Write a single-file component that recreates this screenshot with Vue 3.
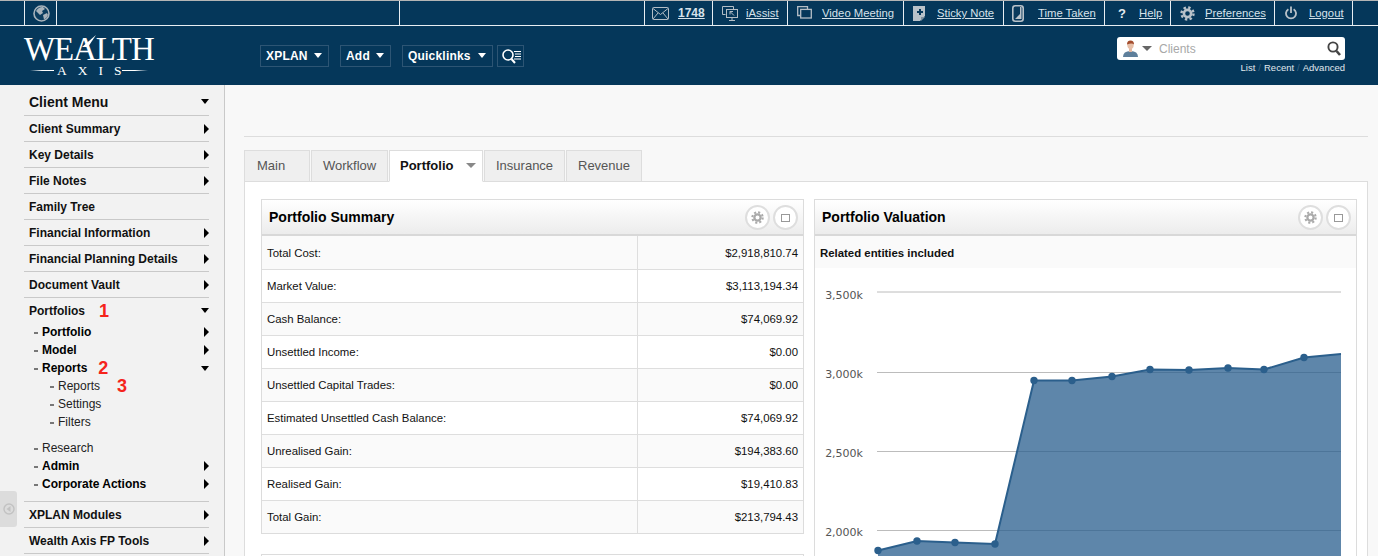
<script setup>
const topItems = [
  { key: 'mail', label: '1748', pad: 7, slot: 26, bold: true },
  { key: 'assist', label: 'iAssist', pad: 9, slot: 24 },
  { key: 'video', label: 'Video Meeting', pad: 9, slot: 25 },
  { key: 'note', label: 'Sticky Note', pad: 9, slot: 24 },
  { key: 'time', label: 'Time Taken', pad: 8, slot: 26 },
  { key: 'help', label: 'Help', pad: 13, slot: 21 },
  { key: 'gear', label: 'Preferences', pad: 9, slot: 25 },
  { key: 'power', label: 'Logout', pad: 10, slot: 24 }
]
const navButtons = ['XPLAN', 'Add', 'Quicklinks']
const menuTop = [
  { label: 'Client Summary', arrow: 'right' },
  { label: 'Key Details', arrow: 'right' },
  { label: 'File Notes', arrow: 'right' },
  { label: 'Family Tree' },
  { label: 'Financial Information', arrow: 'right' },
  { label: 'Financial Planning Details', arrow: 'right' },
  { label: 'Document Vault', arrow: 'right' }
]
const subOne = [
  { label: 'Portfolio', bold: true, arrow: 'right' },
  { label: 'Model', bold: true, arrow: 'right' },
  { label: 'Reports', bold: true, arrow: 'down', mark: '2' },
  { label: 'Reports', deep: true, mark: '3' },
  { label: 'Settings', deep: true },
  { label: 'Filters', deep: true }
]
const subTwo = [
  { label: 'Research' },
  { label: 'Admin', bold: true, arrow: 'right' },
  { label: 'Corporate Actions', bold: true, arrow: 'right' }
]
const menuBottom = ['XPLAN Modules', 'Wealth Axis FP Tools']
const tabs = ['Main', 'Workflow', 'Portfolio', 'Insurance', 'Revenue']
const rows = [
  ['Total Cost:', '$2,918,810.74'],
  ['Market Value:', '$3,113,194.34'],
  ['Cash Balance:', '$74,069.92'],
  ['Unsettled Income:', '$0.00'],
  ['Unsettled Capital Trades:', '$0.00'],
  ['Estimated Unsettled Cash Balance:', '$74,069.92'],
  ['Unrealised Gain:', '$194,383.60'],
  ['Realised Gain:', '$19,410.83'],
  ['Total Gain:', '$213,794.43']
]
const grid = [
  { y: 292, label: '3,500k', base: 299 },
  { y: 372.5, label: '3,000k', base: 378 },
  { y: 451.5, label: '2,500k', base: 457 },
  { y: 530.5, label: '2,000k', base: 536 }
]
const pts = [
  [878, 550.5], [917, 541], [955, 542.5], [995, 544], [1034, 380.5], [1072, 380.5], [1112, 376.5],
  [1150, 369.5], [1189, 370], [1228, 368], [1264, 369.5], [1304, 357.5], [1341, 354]
]
const line = pts.map(p => p.join(',')).join(' ')
const area = `878,570 ${line} 1341,570`
</script>

<template>
  <div class="page">
    <header class="head">
      <div class="topbar">
        <div class="cell"></div>
        <div class="cell globe">
          <svg width="17" height="17" viewBox="0 0 17 17">
            <circle cx="8.5" cy="8.5" r="7.5" fill="#0c3d5f" stroke="#a8b3bb" stroke-width="1.6" />
            <path d="M3 6 Q6 1.5 10 2 L12 4 L9 6 L10 8 L7 10 L5 8 Z M10 10 L14 8 L15 10 Q14 13 11 14.5 Z" fill="#a8b3bb" />
          </svg>
        </div>
        <div class="cell"></div>
        <div class="cell"></div>
        <div v-for="t in topItems" :key="t.key" class="cell item" :style="{ paddingLeft: t.pad + 'px' }">
          <span class="slot" :style="{ width: t.slot + 'px' }">
            <svg v-if="t.key === 'mail'" width="17" height="13" viewBox="0 0 17 13" fill="none" stroke="#b4bec6">
              <rect x=".5" y=".5" width="16" height="12" rx="1" />
              <path d="M1 1.5 L8.5 7.5 L16 1.5 M1 12 L6 6 M16 12 L11 6" />
            </svg>
            <svg v-else-if="t.key === 'assist'" width="16" height="16" viewBox="0 0 16 16" fill="none" stroke="#b4bec6">
              <path d="M3.5 9.5 H.5 V1.5 H11.5 V4" />
              <rect x="4.5" y="4.5" width="11" height="8" />
              <path d="M10 13 V15.5 M7 15.5 H13 M8 6.5 H11 M8 6.5 V9.5 M8 6.5 L12 10.5" />
            </svg>
            <svg v-else-if="t.key === 'video'" width="15" height="14" viewBox="0 0 15 14" fill="none" stroke="#b4bec6" stroke-width="1.3">
              <path d="M3 9.5 H.7 V.7 H10.5 V3" />
              <rect x="3.7" y="3.4" width="10.6" height="8.6" />
            </svg>
            <svg v-else-if="t.key === 'note'" width="12" height="15" viewBox="0 0 12 15">
              <path d="M0 0 H12 V10 L7 15 H0 Z" fill="#b9c2c9" />
              <path d="M8 15 V11 H12 Z" fill="#7f909d" />
              <path d="M6 3 H8 V5 H10 V7 H8 V9 H6 V7 H4 V5 H6 Z" fill="#0a3a5c" />
            </svg>
            <svg v-else-if="t.key === 'time'" width="12" height="17" viewBox="0 0 12 17">
              <rect x=".8" y=".8" width="10.4" height="15.4" rx="2.5" fill="#0a3a5c" stroke="#b9c2c9" stroke-width="1.6" />
              <path d="M8 2 V9 L3 14 H9.5 V2 Z" fill="#b9c2c9" />
            </svg>
            <span v-else-if="t.key === 'help'" class="qmark">?</span>
            <svg v-else-if="t.key === 'gear'" width="15" height="15" viewBox="0 0 15 15" fill="none" stroke="#b9c2c9">
              <circle cx="7.5" cy="7.5" r="3.6" stroke-width="2.6" />
              <circle cx="7.5" cy="7.5" r="6" stroke-width="2.4" stroke-dasharray="2.4 2.31" />
            </svg>
            <svg v-else-if="t.key === 'power'" width="12" height="14" viewBox="0 0 12 14" fill="none" stroke="#b9c2c9" stroke-width="1.8">
              <path d="M3.4 3.2 A5 5 0 1 0 8.6 3.2" />
              <path d="M6 .5 V7" />
            </svg>
          </span>
          <a class="toplink" :class="{ strong: t.bold }">{{ t.label }}</a>
        </div>
        <div class="cell-end"></div>
      </div>

      <div class="brandrow">
        <div class="logo">
          <div class="logo-main">WEALTH</div>
          <svg class="logo-peak" width="30" height="30" viewBox="0 0 30 30">
            <path d="M9 13 L23 1 L15 13 Z" fill="#fff" />
          </svg>
          <div class="logo-sub"><i class="rule rule-l"></i><span>AXIS</span><i class="rule rule-r"></i></div>
        </div>
        <nav class="nav">
          <button v-for="b in navButtons" :key="b" class="navbtn"><span>{{ b }}</span><i class="caret-white"></i></button>
          <button class="navbtn search-btn" aria-label="Search">
            <svg width="22" height="17" viewBox="0 0 22 17" fill="none" stroke="#fff">
              <circle cx="7" cy="7" r="5" stroke-width="1.6" />
              <path d="M10.5 11 L14 15" stroke-width="2" />
              <path d="M13 3.5 H20 M14 6 H20 M14 8.5 H20 M13 11 H20" stroke-width="1" />
            </svg>
          </button>
        </nav>
        <div class="clients">
          <div class="clientbox">
            <svg width="15" height="17" viewBox="0 0 15 17">
              <path d="M0 17 Q0 11 7.5 11 Q15 11 15 17 Z" fill="#5e7f9b" />
              <rect x="6" y="8" width="3" height="4" fill="#e3b9a3" />
              <ellipse cx="7.5" cy="5" rx="3.2" ry="4" fill="#e6bfa8" />
              <path d="M4 4.5 Q4 .5 7.5 .5 Q11 .5 11 4.5 Q9 2.5 4 4.5 Z" fill="#a34d2d" />
            </svg>
            <i class="caret-grey"></i>
            <span class="placeholder">Clients</span>
            <svg class="mag" width="14" height="15" viewBox="0 0 14 15" fill="none" stroke="#444">
              <circle cx="6" cy="6" r="4.6" stroke-width="1.9" />
              <path d="M9.5 10 L13 14" stroke-width="2.6" />
            </svg>
          </div>
          <div class="clientlinks"><a>List</a><em>/</em><a>Recent</a><em>/</em><a>Advanced</a></div>
        </div>
      </div>
    </header>

    <div class="body">
      <aside class="side">
        <div class="menu-row menu-title"><span>Client Menu</span><i class="down"></i></div>
        <div v-for="m in menuTop" :key="m.label" class="menu-row">
          <span>{{ m.label }}</span><i v-if="m.arrow" class="right"></i>
        </div>
        <div class="menu-group">
          <div class="group-head"><span>Portfolios</span><b class="mark mark-one">1</b><i class="down"></i></div>
          <div v-for="s in subOne" :key="s.label + s.deep" class="sub" :class="{ bold: s.bold, deep: s.deep }">
            <span>{{ s.label }}</span><b v-if="s.mark" class="mark">{{ s.mark }}</b>
            <i v-if="s.arrow" :class="s.arrow"></i>
          </div>
          <div class="sub-gap"></div>
          <div v-for="s in subTwo" :key="s.label" class="sub" :class="{ bold: s.bold }">
            <span>{{ s.label }}</span><i v-if="s.arrow" :class="s.arrow"></i>
          </div>
        </div>
        <div v-for="m in menuBottom" :key="m" class="menu-row"><span>{{ m }}</span><i class="right"></i></div>
        <div class="handle">
          <svg width="12" height="12" viewBox="0 0 12 12">
            <circle cx="6" cy="6" r="5" fill="none" stroke="#c2c2c2" stroke-width="1.4" />
            <path d="M7.5 3 V9 L3.5 6 Z" fill="#c2c2c2" />
          </svg>
        </div>
      </aside>

      <main class="main">
        <div class="rule-top"></div>
        <div class="tabs">
          <div v-for="t in tabs" :key="t" class="tab" :class="{ active: t === 'Portfolio' }">
            {{ t }}<i v-if="t === 'Portfolio'" class="caret-tab"></i>
          </div>
        </div>
        <section class="panel">
          <div class="col">
            <div class="widget">
              <div class="w-head">
                <h2>Portfolio Summary</h2>
                <span class="w-btn"><svg width="13" height="13" viewBox="0 0 15 15" fill="none" stroke="#aaa"><circle cx="7.5" cy="7.5" r="3.6" stroke-width="2.6" /><circle cx="7.5" cy="7.5" r="6" stroke-width="2.4" stroke-dasharray="2.4 2.31" /></svg></span>
                <span class="w-btn"><i class="sq"></i></span>
              </div>
              <table class="tbl">
                <tbody>
                  <tr v-for="r in rows" :key="r[0]">
                    <td class="lbl">{{ r[0] }}</td>
                    <td class="val">{{ r[1] }}</td>
                  </tr>
                </tbody>
              </table>
            </div>
            <div class="widget stub"></div>
          </div>
          <div class="col">
            <div class="widget">
              <div class="w-head">
                <h2>Portfolio Valuation</h2>
                <span class="w-btn"><svg width="13" height="13" viewBox="0 0 15 15" fill="none" stroke="#aaa"><circle cx="7.5" cy="7.5" r="3.6" stroke-width="2.6" /><circle cx="7.5" cy="7.5" r="6" stroke-width="2.4" stroke-dasharray="2.4 2.31" /></svg></span>
                <span class="w-btn"><i class="sq"></i></span>
              </div>
              <div class="related">Related entities included</div>
              <svg class="chart" width="541" height="300" viewBox="815 268 541 300">
                <g v-for="g in grid" :key="g.label">
                  <line x1="877" x2="1341" :y1="g.y" :y2="g.y" stroke="#bcbcbc" stroke-width="1" />
                  <text x="863" :y="g.base" text-anchor="end" class="axis">{{ g.label }}</text>
                </g>
                <polygon :points="area" fill="#285e8e" fill-opacity=".75" />
                <polyline :points="line" fill="none" stroke="#2b5f8c" stroke-width="2" />
                <circle v-for="p in pts.slice(0, -1)" :key="p[0]" :cx="p[0]" :cy="p[1]" r="3.7" fill="#2b5f8c" />
              </svg>
            </div>
          </div>
        </section>
      </main>
    </div>
  </div>
</template>

<style scoped>
.page { width: 1378px; height: 556px; overflow: hidden; font-family: "Liberation Sans", Arial, sans-serif; font-size: 12px; color: #111; background: #f8f8f8; display: flex; flex-direction: column; }
i { display: block; font-style: normal; }

.head { height: 85px; flex: none; background: #05375a; box-sizing: border-box; border-top: 1px solid #b5b5b5; }
.topbar { display: grid; grid-template-columns: 25px 32px 343px 245px 68px 75px 116px 100px 101px 66px 104px 78px 1fr; height: 25px; box-sizing: border-box; border-bottom: 1px solid #e8eef2; }
.cell { border-right: 1px solid #e8eef2; box-sizing: border-box; display: flex; align-items: center; }
.globe { justify-content: center; padding-left: 1px; }
.item { white-space: nowrap; }
.slot { display: flex; align-items: center; flex: none; height: 17px; }
.qmark { color: #e6ebef; font-weight: bold; font-size: 13px; }
.toplink { color: #d6e2ea; text-decoration: underline; line-height: 14px; font-size: 11.3px; }
.toplink.strong { font-weight: bold; font-size: 12px; }

.brandrow { display: flex; align-items: flex-start; height: 59px; padding-left: 24px; }
.logo { position: relative; width: 236px; flex: none; color: #fff; font-family: "Liberation Serif", serif; padding-top: 8px; box-sizing: border-box; }
.logo-main { font-size: 33px; letter-spacing: -1.1px; line-height: 30px; height: 30px; white-space: nowrap; }
.logo-peak { position: absolute; left: 49px; top: 8px; }
.logo-sub { display: flex; align-items: center; margin-left: 6px; font-size: 13.5px; line-height: 13px; height: 13px; }
.logo-sub span { letter-spacing: 11px; margin-left: 3px; width: 65px; flex: none; white-space: nowrap; }
.rule { height: 1px; flex: none; }
.rule-l { width: 24px; background: linear-gradient(90deg, #05375a, #fff 50%); }
.rule-r { width: 26px; background: linear-gradient(90deg, #fff 50%, #05375a); }

.nav { display: grid; grid-template-columns: 69px 51px 91px 27px; align-items: center; gap: 11px; padding-top: 19px; }
.navbtn { display: flex; align-items: center; justify-content: space-between; height: 22px; margin: 0; padding: 0 6px 1px 5px; background: transparent; border: 1px solid #2d5574; color: #fff; font: bold 12px "Liberation Sans", Arial, sans-serif; letter-spacing: .2px; box-sizing: border-box; }
.caret-white { width: 0; height: 0; border: 4.5px solid transparent; border-top: 5px solid #fff; border-bottom: 0; flex: none; }
.search-btn { width: 27px; justify-self: start; padding: 0 0 0 3px; margin-left: -7px; }

.clients { margin-left: auto; margin-right: 33px; width: 228px; padding-top: 11px; }
.clientbox { height: 23px; background: #fff; border-radius: 3px; display: flex; align-items: center; padding: 0 4px 0 6px; box-sizing: border-box; }
.caret-grey { width: 0; height: 0; border: 5px solid transparent; border-top: 5px solid #666; border-bottom: 0; margin-left: 4px; }
.placeholder { color: #a8a8a8; margin-left: 7px; }
.mag { margin-left: auto; }
.clientlinks { display: flex; justify-content: flex-end; color: #e0e8ee; font-size: 9.5px; line-height: 12px; margin-top: 2px; }
.clientlinks em { font-style: normal; color: #3f6683; margin: 0 3px; }

.body { flex: 1; display: flex; min-height: 0; }
.side { position: relative; width: 225px; flex: none; background: #f2f2f2; border-right: 1px solid #c9c9c9; box-sizing: border-box; padding-left: 24px; }
.menu-row { width: 185px; height: 26px; box-sizing: border-box; border-bottom: 1px solid #c9c9c9; padding: 0 0 0 5px; display: flex; align-items: center; justify-content: space-between; font-weight: bold; }
.menu-title { height: 31px; font-size: 14px; padding-top: 3px; }
.menu-group { width: 185px; padding-bottom: 8px; border-bottom: 1px solid #c9c9c9; }
.group-head { height: 25px; padding-left: 5px; display: flex; align-items: center; font-weight: bold; }
.group-head .down { margin-left: auto; }
.mark { color: #f5241c; font-weight: bold; font-size: 18px; line-height: 18px; margin-left: 11px; }
.deep .mark { margin-left: 17px; }
.group-head .mark-one { margin-left: 14px; }
.sub { height: 18px; padding-left: 18px; display: flex; align-items: center; position: relative; color: #222; }
.sub::before { content: ""; position: absolute; left: 10px; top: 9px; width: 4px; height: 2px; background: #777; }
.sub.bold { font-weight: bold; color: #000; }
.sub.deep { padding-left: 34px; }
.sub.deep::before { left: 26px; }
.sub > i { margin-left: auto; }
.sub-gap { height: 8px; }
.right { width: 0; height: 0; border: 5px solid transparent; border-left: 5px solid #000; border-right: 0; }
.down { width: 0; height: 0; border: 4.5px solid transparent; border-top: 5px solid #000; border-bottom: 0; }
.handle { position: absolute; left: 0; top: 406px; width: 17px; height: 36px; background: #dcdcdc; border-radius: 0 3px 3px 0; display: flex; align-items: center; justify-content: center; }

.main { flex: 1; min-width: 0; padding: 51px 10px 0 19px; }
.rule-top { height: 1px; background: #ddd; }
.tabs { display: grid; grid-template-columns: 66px 77px 94px 81px 76px; justify-content: start; gap: 1px; margin-top: 13px; height: 31px; position: relative; z-index: 1; }
.tab { display: flex; align-items: center; padding: 0 0 2px 11px; box-sizing: border-box; height: 32px; background: #efefef; border: 1px solid #ddd; font-size: 13px; color: #555; white-space: nowrap; }
.tab:first-child { padding-left: 12px; }
.tab.active { background: #fff; color: #111; font-weight: bold; border-bottom-color: #fff; padding-left: 10px; }
.caret-tab { width: 0; height: 0; border: 5px solid transparent; border-top: 5px solid #888; border-bottom: 0; margin-left: 13px; }
.panel { display: grid; grid-template-columns: 543px 543px; gap: 10px; background: #fff; border: 1px solid #ddd; border-bottom: 0; padding: 17px 10px 0 16px; height: 400px; box-sizing: border-box; }
.col { display: flex; flex-direction: column; gap: 20px; min-width: 0; }
.widget { border: 1px solid #dcdcdc; box-sizing: border-box; background: #fff; }
.stub { height: 20px; flex: none; }
.w-head { height: 36px; box-sizing: border-box; background: linear-gradient(#fff, #ececec); border-bottom: 2px solid #d8d8d8; display: flex; align-items: center; padding: 0 5px 0 7px; gap: 3px; }
.w-head h2 { font-size: 14px; font-weight: bold; margin: 0 auto 0 0; color: #000; }
.w-btn { width: 25px; height: 25px; box-sizing: border-box; border: 2px solid #dedede; border-radius: 50%; background: #fff; display: flex; align-items: center; justify-content: center; margin-top: 1px; }
.sq { width: 9px; height: 8px; border: 1px solid #999; box-sizing: border-box; }
.tbl { width: 100%; border-collapse: collapse; table-layout: fixed; font-size: 11.4px; }
.tbl td { height: 33px; padding: 0; box-sizing: border-box; border-bottom: 1px solid #dedede; }
.tbl tr:first-child td { padding-top: 1px; }
.tbl tr:last-child td { border-bottom: 0; }
.tbl tr:nth-child(odd) { background: #fafafa; }
.lbl { width: 375px; padding-left: 5px !important; border-right: 1px solid #dedede; }
.val { text-align: right; padding-right: 5px !important; }
.related { height: 32px; box-sizing: border-box; padding: 1px 0 0 5px; background: #fafafa; font-weight: bold; font-size: 11.4px; display: flex; align-items: center; color: #111; }
.chart { display: block; }
.axis { font: 11px "DejaVu Sans", sans-serif; fill: #555; }
</style>

<style>
html, body { margin: 0; overflow: hidden; background: #f8f8f8; }
</style>
